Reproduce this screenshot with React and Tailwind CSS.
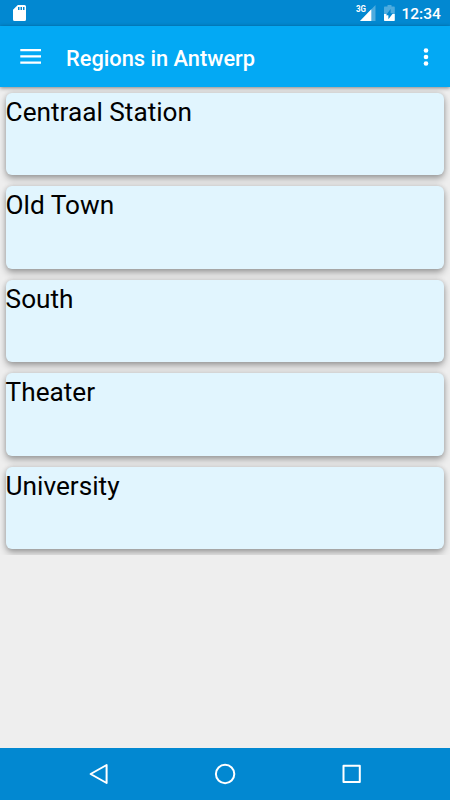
const regions = ['Centraal Station', 'Old Town', 'South', 'Theater', 'University']

const SdCardIcon = () => (
  <svg className="ml-[13px] h-4 w-[13px]" viewBox="0 0 13 16">
    <path
      fill="#fff"
      fillRule="evenodd"
      d="M4.8 0h6.7A1.5 1.5 0 0 1 13 1.5v13a1.5 1.5 0 0 1-1.5 1.5h-10A1.5 1.5 0 0 1 0 14.5V4.8zM5 2v3h1.5V2zM7.5 2v3H9V2zM10 2v3h1.5V2z"
    />
  </svg>
)

const SignalIcon = () => (
  <svg className="h-4 w-[20px] overflow-visible" viewBox="0 0 20 16">
    <path fill="#fff" fillOpacity="0.3" d="M19.5 0v16H4z" />
    <path fill="#fff" d="M15.3 4.3V16H4z" />
    <text x="0" y="7" fill="#fff" fontSize="9" fontWeight="700" fontFamily="Roboto, sans-serif" textLength="10" lengthAdjust="spacingAndGlyphs">3G</text>
  </svg>
)

const BatteryIcon = () => (
  <svg className="ml-[8px] h-4 w-[11px]" viewBox="0 0 11 16">
    <path fill="#fff" fillOpacity="0.3" d="M3.5 0h4v1.6H10a.8.8 0 0 1 .8.8V9H0V2.4a.8.8 0 0 1 .8-.8h2.7z" />
    <path fill="#fff" d="M0 9h10.8v6.2a.8.8 0 0 1-.8.8H.8a.8.8 0 0 1-.8-.8z" />
    <path fill="#0288d1" d="M4.4 14.3V10.3H2L6.6 4v4.300H9z" />
  </svg>
)

const StatusBar = () => (
  <div className="flex h-[26px] shrink-0 items-center bg-[#0288d1] pr-[9px] text-white">
    <SdCardIcon />
    <div className="flex-1" />
    <SignalIcon />
    <BatteryIcon />
    <span className="ml-[7px] w-[39.5px] pt-[3px] text-[15.5px] leading-none font-medium">12:34</span>
  </div>
)

const Toolbar = () => (
  <header className="relative z-10 flex h-[61px] shrink-0 items-center bg-[#03a9f4] text-white shadow-[0_1px_4px_rgba(0,0,0,0.45)]">
    <button className="ml-[20px]">
      <svg className="h-[15px] w-[21px]" viewBox="0 0 21 15" fill="#fff">
        <path d="M.3 0h20.7v2.3H.3zM.3 6.3h20.7v2.3H.3zM.3 12.5h20.7v2.3H.3z" />
      </svg>
    </button>
    <h1 className="ml-[25px] flex-1 pt-[4px] text-[21.8px] leading-none font-medium">Regions in Antwerp</h1>
    <button className="mr-[21px]">
      <svg className="h-[18px] w-[6px]" viewBox="0 0 6 18" fill="#fff">
        <circle cx="3" cy="2.5" r="2.3" />
        <circle cx="3" cy="9" r="2.3" />
        <circle cx="3" cy="15.5" r="2.3" />
      </svg>
    </button>
  </header>
)

const RegionCard = ({ name }) => (
  <li className="h-[82.5px] rounded-[6px] bg-[#e1f5fe] shadow-[0_4px_7px_rgba(0,0,0,0.3),0_0_5px_rgba(0,0,0,0.16)]">
    <span className="block pt-[4px] text-[26.2px] leading-[31px] text-black">{name}</span>
  </li>
)

const NavigationBar = () => (
  <nav className="flex h-[52.5px] shrink-0 items-center justify-center gap-[104px] bg-[#0288d1]">
    <svg className="h-[22px] w-[22px]" viewBox="0 0 22 22" fill="none" stroke="#fff" strokeWidth="2" strokeLinejoin="round">
      <path d="M18.6 2v18L2.6 11z" />
    </svg>
    <svg className="h-[22px] w-[22px]" viewBox="0 0 22 22" fill="none" stroke="#fff" strokeWidth="2">
      <circle cx="11.1" cy="11" r="9.2" />
    </svg>
    <svg className="h-[22px] w-[22px]" viewBox="0 0 22 22" fill="none" stroke="#fff" strokeWidth="2" strokeLinejoin="round">
      <path d="M3.5 2.8h16.3v16.3H3.5z" />
    </svg>
  </nav>
)

const App = () => {
  return (
    <div className="flex h-screen w-full flex-col bg-[#eeeeee] font-['Roboto',sans-serif]">
      <StatusBar />
      <Toolbar />
      <main className="flex-1 overflow-hidden">
        <ul className="flex flex-col gap-[11px] overflow-hidden pt-[5.8px] pr-[5.8px] pb-[5.5px] pl-[5.6px]">
          {regions.map((name) => (
            <RegionCard key={name} name={name} />
          ))}
        </ul>
      </main>
      <NavigationBar />
    </div>
  )
}

export default App
